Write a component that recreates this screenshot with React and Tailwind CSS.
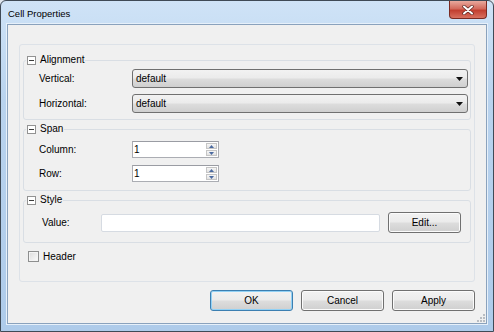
import React from 'react';

const btnBg =
  'bg-[linear-gradient(to_bottom,#f2f2f2_0%,#ebebeb_48%,#dddddd_52%,#cfcfcf_100%)]';

function Legend({ children, shift }) {
  return (
    <legend className={`${shift} px-[1px] flex items-center gap-[4px] h-[14px] leading-[14px]`}>
      <span className="w-[9px] h-[9px] border border-[#929292] bg-white flex items-center justify-center">
        <span className="w-[5px] h-[1px] bg-[#3b3b3b]" />
      </span>
      <span>{children}</span>
    </legend>
  );
}

function Dropdown({ value }) {
  return (
    <div className={`h-[19px] flex items-center justify-between border border-[#707070] rounded-[3px] pl-[3px] pr-[4px] ${btnBg}`}>
      <span>{value}</span>
      <svg width="7" height="4" viewBox="0 0 7 4">
        <path d="M0 0H7L3.5 4Z" fill="#111" />
      </svg>
    </div>
  );
}

function Spinner({ value }) {
  return (
    <div className="w-[87px] h-[17px] flex border border-[#abadb3] border-t-[#9a9ca3] bg-white">
      <span className="flex-1 pl-[1px] leading-[15px]">{value}</span>
      <div className="w-[12px] flex flex-col gap-[1px] p-[1px] pl-0">
        {[0, 1].map((i) => (
          <div
            key={i}
            className="flex-1 flex items-center justify-center border border-[#c5c5c5] bg-[linear-gradient(to_bottom,#f6f6f6,#e2e2e2)]"
          >
            <svg width="5" height="3" viewBox="0 0 5 3">
              <path d={i === 0 ? 'M0 3H5L2.5 0Z' : 'M0 0H5L2.5 3Z'} fill="#4b6aa0" />
            </svg>
          </div>
        ))}
      </div>
    </div>
  );
}

function Button({ children, primary, width = 'w-[83px]' }) {
  return (
    <button
      className={`${width} h-[21px] rounded-[3px] border ${
        primary ? 'border-[#3c7fb1] shadow-[inset_0_0_0_1px_#92d1f5]' : 'border-[#707070] shadow-[inset_0_0_0_1px_#fbfbfb]'
      } ${btnBg} text-black`}
    >
      {children}
    </button>
  );
}

export default function App() {
  return (
    <div className="w-[494px] h-[332px] bg-[#dfe6ee] font-['Liberation_Sans',Arial,sans-serif] text-[10px] text-black">
      <div className="w-full h-full flex flex-col border border-[#3f4a56] rounded-t-[6px] bg-[linear-gradient(to_bottom,#cfe3f7,#b9d3ee_30%,#aecbea)] overflow-hidden">
        {/* TITLE BAR */}
        <div className="h-[23px] flex items-start justify-between">
          <span className="pl-[7px] pt-[6px] text-[9.5px] leading-[13px]">Cell Properties</span>
          <div className="mr-[6px] w-[38px] h-[18px] rounded-b-[4px] border border-t-0 border-[#7a2a22] bg-[linear-gradient(to_bottom,#e9a99d,#d36a5c_45%,#c23f30_55%,#d8705f)] flex items-center justify-center">
            <svg width="12" height="10" viewBox="0 0 12 10">
              <path d="M2 1.5L10 8.5M10 1.5L2 8.5" stroke="#5a2520" strokeWidth="3.4" strokeLinecap="round" />
              <path d="M2 1.5L10 8.5M10 1.5L2 8.5" stroke="#fff" strokeWidth="2" strokeLinecap="round" />
            </svg>
          </div>
        </div>

        {/* CLIENT */}
        <div className="relative flex-1 mx-[6px] mb-[7px] border border-[#8aa2bd] bg-[#f0f0f0] flex flex-col shadow-[0_0_0_1px_#e6f0fa]">
          <div className="mt-[19px] mx-[11px] border border-[#dde2e8] rounded-[3px] px-[3px] pt-[8px] pb-[19px]">
            {/* ALIGNMENT */}
            <fieldset className="border border-[#d9dee4] rounded-[3px] pl-[15px] pr-[2px] pt-[2px] pb-[6px]">
              <Legend shift="-ml-[13px]">Alignment</Legend>
              <div className="grid grid-cols-[93px_1fr] gap-y-[6px] items-center">
                <span>Vertical:</span>
                <Dropdown value="default" />
                <span>Horizontal:</span>
                <Dropdown value="default" />
              </div>
            </fieldset>

            {/* SPAN */}
            <fieldset className="mt-[2px] border border-[#d9dee4] rounded-[3px] pl-[15px] pr-[2px] pt-[5px] pb-[8px]">
              <Legend shift="-ml-[13px]">Span</Legend>
              <div className="grid grid-cols-[93px_1fr] gap-y-[7px] items-center">
                <span>Column:</span>
                <Spinner value="1" />
                <span>Row:</span>
                <Spinner value="1" />
              </div>
            </fieldset>

            {/* STYLE */}
            <fieldset className="mt-[2px] border border-[#d9dee4] rounded-[3px] pl-[18px] pr-[9px] pt-[5px] pb-[9px]">
              <Legend shift="-ml-[16px]">Style</Legend>
              <div className="flex items-center h-[21px]">
                <span className="w-[59px]">Value:</span>
                <div className="flex-1 h-[18px] border border-[#d6dbe2] bg-white rounded-[2px]" />
                <div className="ml-[8px]">
                  <Button width="w-[73px]">Edit...</Button>
                </div>
              </div>
            </fieldset>

            {/* HEADER CHECKBOX */}
            <label className="mt-[7px] ml-[5px] flex items-center gap-[4px] h-[12px]">
              <span className="w-[11px] h-[11px] border border-[#8e8f8f] bg-[linear-gradient(135deg,#dcdcdc,#fbfbfb)] shadow-[inset_0_0_0_1px_#f4f4f4]" />
              <span>Header</span>
            </label>
          </div>

          {/* BUTTONS */}
          <div className="mt-[8px] mr-[11px] flex justify-end gap-[8px]">
            <Button primary>OK</Button>
            <Button>Cancel</Button>
            <Button>Apply</Button>
          </div>

          {/* RESIZE GRIP */}
          <svg className="absolute right-[1px] bottom-[1px]" width="8" height="8" viewBox="0 0 8 8">
            {[[6, 0], [6, 3], [3, 3], [6, 6], [3, 6], [0, 6]].map(([x, y], i) => (
              <rect key={i} x={x} y={y} width="2" height="2" fill="#b9bdc2" />
            ))}
          </svg>
        </div>
      </div>
    </div>
  );
}
